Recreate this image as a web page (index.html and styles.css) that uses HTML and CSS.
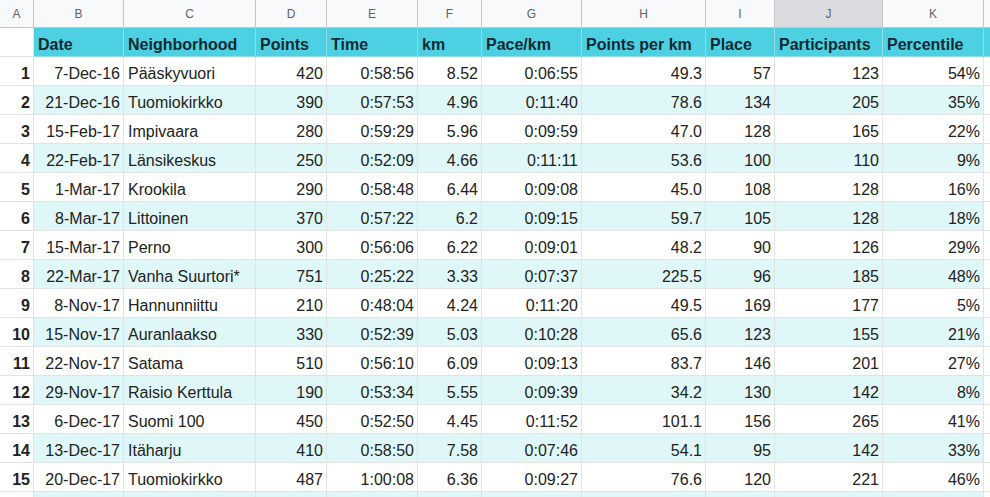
FILE: index.html
```html
<!DOCTYPE html>
<html>
<head>
<meta charset="utf-8">
<link rel="stylesheet" href="styles.css">
</head>
<body>
<div class="sheet">
  <div class="row letters">
    <div class="c">A</div><div class="c">B</div><div class="c">C</div><div class="c">D</div><div class="c">E</div><div class="c">F</div><div class="c">G</div><div class="c">H</div><div class="c">I</div><div class="c sel">J</div><div class="c">K</div><div class="c"></div>
  </div>
  <div class="row title">
    <div class="c a"></div><div class="c">Date</div><div class="c">Neighborhood</div><div class="c">Points</div><div class="c">Time</div><div class="c">km</div><div class="c">Pace/km</div><div class="c">Points per km</div><div class="c">Place</div><div class="c">Participants</div><div class="c">Percentile</div><div class="c"></div>
  </div>
  <div class="row odd"><div class="c a">1</div><div class="c r">7-Dec-16</div><div class="c">Pääskyvuori</div><div class="c r">420</div><div class="c r">0:58:56</div><div class="c r">8.52</div><div class="c r">0:06:55</div><div class="c r">49.3</div><div class="c r">57</div><div class="c r">123</div><div class="c r">54%</div><div class="c x"></div></div>
  <div class="row even"><div class="c a">2</div><div class="c r">21-Dec-16</div><div class="c">Tuomiokirkko</div><div class="c r">390</div><div class="c r">0:57:53</div><div class="c r">4.96</div><div class="c r">0:11:40</div><div class="c r">78.6</div><div class="c r">134</div><div class="c r">205</div><div class="c r">35%</div><div class="c x"></div></div>
  <div class="row odd"><div class="c a">3</div><div class="c r">15-Feb-17</div><div class="c">Impivaara</div><div class="c r">280</div><div class="c r">0:59:29</div><div class="c r">5.96</div><div class="c r">0:09:59</div><div class="c r">47.0</div><div class="c r">128</div><div class="c r">165</div><div class="c r">22%</div><div class="c x"></div></div>
  <div class="row even"><div class="c a">4</div><div class="c r">22-Feb-17</div><div class="c">Länsikeskus</div><div class="c r">250</div><div class="c r">0:52:09</div><div class="c r">4.66</div><div class="c r">0:11:11</div><div class="c r">53.6</div><div class="c r">100</div><div class="c r">110</div><div class="c r">9%</div><div class="c x"></div></div>
  <div class="row odd"><div class="c a">5</div><div class="c r">1-Mar-17</div><div class="c">Krookila</div><div class="c r">290</div><div class="c r">0:58:48</div><div class="c r">6.44</div><div class="c r">0:09:08</div><div class="c r">45.0</div><div class="c r">108</div><div class="c r">128</div><div class="c r">16%</div><div class="c x"></div></div>
  <div class="row even"><div class="c a">6</div><div class="c r">8-Mar-17</div><div class="c">Littoinen</div><div class="c r">370</div><div class="c r">0:57:22</div><div class="c r">6.2</div><div class="c r">0:09:15</div><div class="c r">59.7</div><div class="c r">105</div><div class="c r">128</div><div class="c r">18%</div><div class="c x"></div></div>
  <div class="row odd"><div class="c a">7</div><div class="c r">15-Mar-17</div><div class="c">Perno</div><div class="c r">300</div><div class="c r">0:56:06</div><div class="c r">6.22</div><div class="c r">0:09:01</div><div class="c r">48.2</div><div class="c r">90</div><div class="c r">126</div><div class="c r">29%</div><div class="c x"></div></div>
  <div class="row even"><div class="c a">8</div><div class="c r">22-Mar-17</div><div class="c">Vanha Suurtori*</div><div class="c r">751</div><div class="c r">0:25:22</div><div class="c r">3.33</div><div class="c r">0:07:37</div><div class="c r">225.5</div><div class="c r">96</div><div class="c r">185</div><div class="c r">48%</div><div class="c x"></div></div>
  <div class="row odd"><div class="c a">9</div><div class="c r">8-Nov-17</div><div class="c">Hannunniittu</div><div class="c r">210</div><div class="c r">0:48:04</div><div class="c r">4.24</div><div class="c r">0:11:20</div><div class="c r">49.5</div><div class="c r">169</div><div class="c r">177</div><div class="c r">5%</div><div class="c x"></div></div>
  <div class="row even"><div class="c a">10</div><div class="c r">15-Nov-17</div><div class="c">Auranlaakso</div><div class="c r">330</div><div class="c r">0:52:39</div><div class="c r">5.03</div><div class="c r">0:10:28</div><div class="c r">65.6</div><div class="c r">123</div><div class="c r">155</div><div class="c r">21%</div><div class="c x"></div></div>
  <div class="row odd"><div class="c a">11</div><div class="c r">22-Nov-17</div><div class="c">Satama</div><div class="c r">510</div><div class="c r">0:56:10</div><div class="c r">6.09</div><div class="c r">0:09:13</div><div class="c r">83.7</div><div class="c r">146</div><div class="c r">201</div><div class="c r">27%</div><div class="c x"></div></div>
  <div class="row even"><div class="c a">12</div><div class="c r">29-Nov-17</div><div class="c">Raisio Kerttula</div><div class="c r">190</div><div class="c r">0:53:34</div><div class="c r">5.55</div><div class="c r">0:09:39</div><div class="c r">34.2</div><div class="c r">130</div><div class="c r">142</div><div class="c r">8%</div><div class="c x"></div></div>
  <div class="row odd"><div class="c a">13</div><div class="c r">6-Dec-17</div><div class="c">Suomi 100</div><div class="c r">450</div><div class="c r">0:52:50</div><div class="c r">4.45</div><div class="c r">0:11:52</div><div class="c r">101.1</div><div class="c r">156</div><div class="c r">265</div><div class="c r">41%</div><div class="c x"></div></div>
  <div class="row even"><div class="c a">14</div><div class="c r">13-Dec-17</div><div class="c">Itäharju</div><div class="c r">410</div><div class="c r">0:58:50</div><div class="c r">7.58</div><div class="c r">0:07:46</div><div class="c r">54.1</div><div class="c r">95</div><div class="c r">142</div><div class="c r">33%</div><div class="c x"></div></div>
  <div class="row odd"><div class="c a">15</div><div class="c r">20-Dec-17</div><div class="c">Tuomiokirkko</div><div class="c r">487</div><div class="c r">1:00:08</div><div class="c r">6.36</div><div class="c r">0:09:27</div><div class="c r">76.6</div><div class="c r">120</div><div class="c r">221</div><div class="c r">46%</div><div class="c x"></div></div>
  <div class="row even"><div class="c a"></div><div class="c"></div><div class="c"></div><div class="c"></div><div class="c"></div><div class="c"></div><div class="c"></div><div class="c"></div><div class="c"></div><div class="c"></div><div class="c"></div><div class="c x"></div></div>
</div>
</body>
</html>
```

FILE: styles.css
```css
html, body {
  margin: 0;
  padding: 0;
  background: #ffffff;
  overflow: hidden;
}
.sheet {
  width: 990px;
  height: 497px;
  overflow: hidden;
  font-family: "Liberation Sans", Arial, sans-serif;
  font-size: 16px;
  color: #222222;
}
.row {
  display: grid;
  grid-template-columns: 34px 90px 132px 71px 91px 64px 100px 124px 69px 108px 101px 40px;
  height: 29px;
}
.c {
  box-sizing: border-box;
  border-right: 1px solid #e2e3e3;
  border-bottom: 1px solid #e2e3e3;
  padding: 0 3px 2px 4px;
  line-height: 18px;
  display: flex;
  align-items: flex-end;
  white-space: nowrap;
  overflow: hidden;
}
.r {
  justify-content: flex-end;
}
.a {
  justify-content: flex-end;
  font-weight: bold;
  background: #ffffff;
  padding-right: 3px;
}
.letters {
  height: 28px;
}
.letters .c {
  background: #f8f9fa;
  border-right: 1px solid #c4c7c5;
  border-bottom: 1px solid #c4c7c5;
  justify-content: center;
  align-items: center;
  padding: 0;
  font-size: 12px;
  color: #5f6368;
}
.letters .sel {
  background: #dadce0;
}
.title .c {
  background: #4dd0e1;
  font-weight: bold;
  color: #0d2a33;
  border-right-color: #8fdde8;
  border-bottom-color: #8fdde8;
}
.title .a {
  background: #ffffff;
  border-right-color: #e2e3e3;
  border-bottom-color: #e2e3e3;
}
.even .c {
  background: #e0f7fa;
}
.even .a,
.even .x {
  background: #ffffff;
}
```
